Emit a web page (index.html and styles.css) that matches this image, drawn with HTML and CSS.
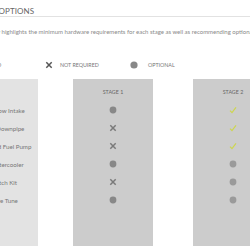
FILE: index.html
```html
<!DOCTYPE html>
<html>
<head>
<meta charset="utf-8">
<link rel="stylesheet" href="styles.css">
</head>
<body>
<div class="page">
  <div class="header">
    <h1 class="title">Upgrade Options</h1>
  </div>
  <p class="desc">The table below highlights the minimum hardware requirements for each stage as well as recommending optional extras.</p>
  <div class="legend">
    <div class="legend-item">
      <svg class="icon" viewBox="0 0 8 8"><path class="check" d="M1 4.6 L3 6.6 L7 1.4"/></svg>
      <span>Required</span>
    </div>
    <div class="legend-item">
      <svg class="icon" viewBox="0 0 8 8"><path class="cross dark" d="M1.3 1.3 L6.7 6.7 M6.7 1.3 L1.3 6.7"/></svg>
      <span>Not Required</span>
    </div>
    <div class="legend-item">
      <svg class="icon" viewBox="0 0 8 8"><circle class="dot" cx="4" cy="4" r="3.6"/></svg>
      <span>Optional</span>
    </div>
  </div>
  <div class="table">
    <div class="col labels">
      <div class="row">High Flow Intake</div>
      <div class="row">Turbo Downpipe</div>
      <div class="row">Uprated Fuel Pump</div>
      <div class="row">Alloy Intercooler</div>
      <div class="row">HD Clutch Kit</div>
      <div class="row">Software Tune</div>
    </div>
    <div class="col stage">
      <div class="stage-name">Stage 1</div>
      <div class="row"><svg class="icon" viewBox="0 0 8 8"><circle class="dot" cx="4" cy="4" r="3.4"/></svg></div>
      <div class="row"><svg class="icon" viewBox="0 0 8 8"><path class="cross" d="M1.3 1.3 L6.7 6.7 M6.7 1.3 L1.3 6.7"/></svg></div>
      <div class="row"><svg class="icon" viewBox="0 0 8 8"><path class="cross" d="M1.3 1.3 L6.7 6.7 M6.7 1.3 L1.3 6.7"/></svg></div>
      <div class="row"><svg class="icon" viewBox="0 0 8 8"><circle class="dot" cx="4" cy="4" r="3.4"/></svg></div>
      <div class="row"><svg class="icon" viewBox="0 0 8 8"><path class="cross" d="M1.3 1.3 L6.7 6.7 M6.7 1.3 L1.3 6.7"/></svg></div>
      <div class="row"><svg class="icon" viewBox="0 0 8 8"><circle class="dot" cx="4" cy="4" r="3.4"/></svg></div>
    </div>
    <div class="col stage stage-two">
      <div class="stage-name">Stage 2</div>
      <div class="row"><svg class="icon" viewBox="0 0 8 8"><path class="check" d="M1 4.6 L3 6.6 L7 1.4"/></svg></div>
      <div class="row"><svg class="icon" viewBox="0 0 8 8"><path class="check" d="M1 4.6 L3 6.6 L7 1.4"/></svg></div>
      <div class="row"><svg class="icon" viewBox="0 0 8 8"><path class="check" d="M1 4.6 L3 6.6 L7 1.4"/></svg></div>
      <div class="row"><svg class="icon" viewBox="0 0 8 8"><circle class="dot light" cx="4" cy="4" r="3.4"/></svg></div>
      <div class="row"><svg class="icon" viewBox="0 0 8 8"><circle class="dot light" cx="4" cy="4" r="3.4"/></svg></div>
      <div class="row"><svg class="icon" viewBox="0 0 8 8"><circle class="dot light" cx="4" cy="4" r="3.4"/></svg></div>
    </div>
  </div>
</div>
</body>
</html>
```
FILE: styles.css
```css
html, body {
  margin: 0;
  padding: 0;
  background: #ffffff;
  overflow: hidden;
}
body {
  font-family: Lato, "Open Sans", sans-serif;
  color: #888888;
}
.page {
  margin-left: -42px;
  width: 340px;
}
.header {
  border-bottom: 1px solid #e2e2e2;
  height: 17px;
  box-sizing: border-box;
  padding-top: 6px;
}
.title {
  margin: 0;
  font-size: 8px;
  line-height: 10px;
  font-weight: 400;
  text-transform: uppercase;
  color: #666666;
  letter-spacing: 0.1px;
}
.desc {
  margin: 11px 0 0 0;
  font-size: 6px;
  line-height: 8px;
  white-space: nowrap;
  color: #8a8a8a;
}
.legend {
  display: flex;
  margin-top: 25px;
  height: 8px;
  margin-left: 2px;
}
.legend-item {
  width: 85px;
  display: flex;
  align-items: center;
  gap: 7px;
  font-size: 5.3px;
  text-transform: uppercase;
  color: #777777;
  white-space: nowrap;
}
.legend-item + .legend-item + .legend-item span {
  margin-left: 3px;
}
.icon {
  width: 8px;
  height: 8px;
  display: block;
}
.check {
  fill: none;
  stroke: #cdd64f;
  stroke-width: 1.2;
}
.cross {
  fill: none;
  stroke: #7a7a7a;
  stroke-width: 1.5;
}
.cross.dark {
  stroke: #555555;
}
.dot {
  fill: #888888;
}
.dot.light {
  fill: #9a9a9a;
}
.table {
  display: flex;
  margin-top: 10px;
  height: 167px;
}
.col {
  width: 80px;
  box-sizing: border-box;
}
.labels {
  background: #e3e3e3;
  margin-right: 35px;
  padding-top: 22px;
  padding-left: 21px;
}
.labels .row {
  font-size: 6.2px;
  color: #777777;
  white-space: nowrap;
  justify-content: flex-start;
}
.stage {
  background: #cccccc;
  padding-top: 9px;
}
.stage-two {
  margin-left: 40px;
}
.stage-name {
  text-align: center;
  font-size: 5.3px;
  line-height: 8px;
  text-transform: uppercase;
  color: #666666;
  margin-bottom: 5px;
}
.row {
  height: 18px;
  display: flex;
  align-items: center;
  justify-content: center;
}
```
